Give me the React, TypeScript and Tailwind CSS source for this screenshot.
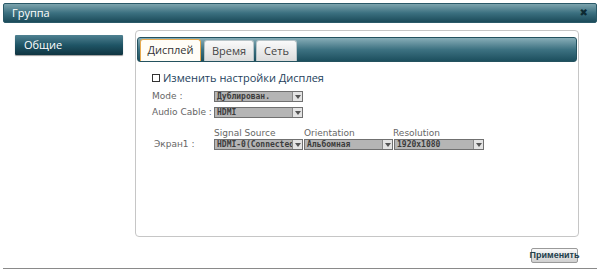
import React from 'react';

const SelectBox: React.FC<{ value: string; width: string }> = ({ value, width }) => (
  <div className={`flex h-[11px] items-stretch border border-[#707070] bg-[#b5b5b5] ${width}`}>
    <div className="flex-1 overflow-hidden whitespace-nowrap pl-[2px] font-['DejaVu_Sans_Mono',monospace] text-[8px] leading-[9px] font-bold text-[#3c3c3c]">
      {value}
    </div>
    <div className="flex w-[10px] items-center justify-center border-l border-[#8a8a8a] bg-[#e4e4e4]">
      <svg width="6" height="4" viewBox="0 0 6 4">
        <path d="M0 0 L6 0 L3 4 Z" fill="#555" />
      </svg>
    </div>
  </div>
);

const TABS = [
  { label: 'Дисплей', w: 'w-[61px]' },
  { label: 'Время', w: 'w-[50px]' },
  { label: 'Сеть', w: 'w-[41px]' },
];

export default function App() {
  return (
    <div className="relative flex h-[270px] w-[600px] flex-col bg-white font-['DejaVu_Sans',sans-serif] text-[#333]">
      {/* title bar */}
      <div className="mx-[3px] mt-[3px] flex h-[20px] items-center justify-between rounded-[2px] border border-[#2a5968] bg-gradient-to-b from-[#7ca4ae] via-[#3b7080] to-[#1b4b5a] px-[8px]">
        <span className="font-['Open_Sans',sans-serif] text-[11px] text-white">Группа</span>
        <span className="text-[10px] leading-none font-bold text-[#0d2a33]">✖</span>
      </div>

      <div className="flex flex-1">
        {/* sidebar */}
        <div className="ml-[15px] mt-[12px] flex h-[20px] w-[108px] items-center rounded-[1px] bg-gradient-to-b from-[#4f8292] via-[#1f5566] to-[#0f3441] pl-[9px] shadow-[0_1px_1px_rgba(0,0,0,0.4)]">
          <span className="font-['Open_Sans',sans-serif] text-[11px] text-white">Общие</span>
        </div>

        {/* content panel */}
        <div className="ml-[12px] mt-[7px] flex h-[207px] w-[444px] flex-col rounded-[4px] border border-[#c6c6c6] px-[1px] pt-[6px]">
          <div className="flex h-[25px] items-end gap-[2px] rounded-[3px] border border-[#24525f] bg-gradient-to-b from-[#88aeb8] via-[#3d7282] to-[#1c4f5e] pl-[2px]">
            {TABS.map((t, i) => (
              <div
                key={t.label}
                className={
                  i === 0
                    ? `mr-[1px] flex h-[22px] ${t.w} items-center justify-center rounded-t-[3px] border border-b-0 border-[#e6a94e] bg-[#fffdf7] font-['Open_Sans',sans-serif] text-[11px] text-[#333]`
                    : `flex h-[21px] ${t.w} items-center justify-center rounded-t-[3px] border border-b-0 border-[#b8c4c8] bg-gradient-to-b from-[#fafafa] to-[#dcdcdc] font-['Open_Sans',sans-serif] text-[11px] text-[#444]`
                }
              >
                {t.label}
              </div>
            ))}
          </div>

          <div className="flex flex-col pl-[15px] pt-[8px] text-[9px] leading-[11px] text-[#666]">
            <label className="flex h-[15px] items-center gap-[3px] font-['Open_Sans',sans-serif] text-[11px] leading-[15px] text-[#243f5c]">
              <span className="inline-block h-[8px] w-[8px] border border-[#333] bg-white" />
              Изменить настройки Дисплея
            </label>

            <div className="mt-[6px] flex h-[11px] items-center">
              <span className="w-[62px]">Mode :</span>
              <SelectBox value="Дублирован." width="w-[89px]" />
            </div>
            <div className="mt-[5px] flex h-[11px] items-center">
              <span className="w-[62px]">Audio Cable :</span>
              <SelectBox value="HDMI" width="w-[89px]" />
            </div>

            <div className="mt-[10px] flex h-[11px]">
              <span className="w-[62px]" />
              <span className="w-[90px]">Signal Source</span>
              <span className="w-[89px]">Orientation</span>
              <span>Resolution</span>
            </div>
            <div className="flex h-[11px] items-center">
              <span className="w-[62px] pl-[2px]">Экран1 :</span>
              <SelectBox value="HDMI-0(Connected)" width="w-[89px]" />
              <div className="w-[1px]" />
              <SelectBox value="Альбомная" width="w-[89px]" />
              <div className="w-[1px]" />
              <SelectBox value="1920x1080" width="w-[90px]" />
            </div>
          </div>
        </div>
      </div>

      {/* footer */}
      <div className="flex justify-end pr-[22px] pb-[5px]">
        <button className="flex h-[15px] w-[47px] items-center justify-center rounded-[2px] border border-[#9a9a9a] bg-gradient-to-b from-[#fafafa] to-[#cfcfcf] font-['Liberation_Sans',sans-serif] text-[9px] font-bold text-[#1e3e4c]">
          Применить
        </button>
      </div>
      <div className="mx-[3px] mb-[1px] h-[1px] bg-[#8a8a8a]" />
    </div>
  );
}
